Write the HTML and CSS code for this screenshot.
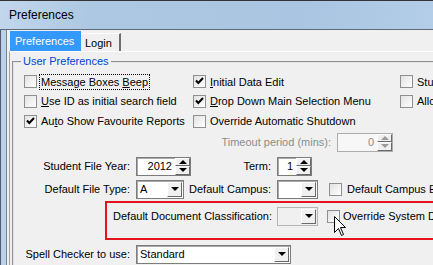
FILE: index.html
```html
<!DOCTYPE html>
<html lang="en">
<head>
    <meta charset="UTF-8">
    <title>Preferences</title>
    <link rel="stylesheet" href="styles.css">
</head>
<body>
    <div class="win">
        <div class="caption">Preferences</div>
        <div class="main">
            <div class="frame"></div>
            <div class="client">
                <div class="tabs">
                    <span class="tab cur">Preferences</span>
                    <span class="tab">Login</span>
                </div>
                <div class="page">
                    <fieldset class="group">
                        <legend>User Preferences</legend>
                        <div class="checks">
                            <div class="chk"><span class="box"></span><span class="focus">Message Boxes <u>B</u>eep</span></div>
                            <div class="chk"><span class="box"><svg width="11" height="11" viewBox="0 0 11 11"><path d="M2 4.5 L4.3 7 L9 2" fill="none" stroke="#000" stroke-width="2"/></svg></span><span><u>I</u>nitial Data Edit</span></div>
                            <div class="chk"><span class="box"></span><span>Student Search Default</span></div>
                            <div class="chk"><span class="box"></span><span><u>U</u>se ID as initial search field</span></div>
                            <div class="chk"><span class="box"><svg width="11" height="11" viewBox="0 0 11 11"><path d="M2 4.5 L4.3 7 L9 2" fill="none" stroke="#000" stroke-width="2"/></svg></span><span><u>D</u>rop Down Main Selection Menu</span></div>
                            <div class="chk"><span class="box"></span><span>Allow Multiple Logins</span></div>
                            <div class="chk"><span class="box"><svg width="11" height="11" viewBox="0 0 11 11"><path d="M2 4.5 L4.3 7 L9 2" fill="none" stroke="#000" stroke-width="2"/></svg></span><span>Au<u>t</u>o Show Favourite Reports</span></div>
                            <div class="chk"><span class="box"></span><span>Override Automatic Shutdown</span></div>
                        </div>

                        <div class="row r-timeout">
                            <span class="lbl off" style="width: 323px">Timeout period (mins):</span>
                            <div class="spin off" style="width: 56px"><span class="val">0</span><span class="arrows"><i class="up"></i><i class="dn"></i></span></div>
                        </div>

                        <div class="row r-year">
                            <span class="lbl" style="width: 122px">Student File Year:</span>
                            <div class="spin" style="width: 55px"><span class="val">2012</span><span class="arrows"><i class="up"></i><i class="dn"></i></span></div>
                            <span class="lbl" style="width: 86px">Term:</span>
                            <div class="spin" style="width: 35px"><span class="val">1</span><span class="arrows"><i class="up"></i><i class="dn"></i></span></div>
                        </div>

                        <div class="row r-type">
                            <span class="lbl" style="width: 122px">Default File Type:</span>
                            <div class="combo" style="width: 48px"><span class="val">A</span><span class="drop"></span></div>
                            <span class="lbl" style="width: 93px">Default Campus:</span>
                            <div class="combo" style="width: 41px"><span class="val"></span><span class="drop"></span></div>
                            <div class="chk c-campus"><span class="box"></span><span>Default Campus Enrolment</span></div>
                        </div>

                        <div class="redbox">
                            <div class="row">
                                <span class="lbl" style="width: 170px">Default Document Classification:</span>
                                <div class="combo off" style="width: 41px"><span class="val"></span><span class="drop"></span></div>
                                <div class="chk c-override"><span class="box"></span><span>Override System Default</span></div>
                            </div>
                        </div>

                        <div class="row r-spell">
                            <span class="lbl" style="width: 122px">Spell Checker to use:</span>
                            <div class="combo" style="width: 155px"><span class="val">Standard</span><span class="drop"></span></div>
                        </div>
                    </fieldset>
                </div>
            </div>
        </div>
        <svg class="cursor" width="13" height="21" viewBox="0 0 13 21"><path d="M0.5 0.5 L0.5 16.5 L4.5 12.5 L7.5 19.5 L9.5 18.5 L6.5 11.5 L11.5 11.5 Z" fill="#fff" stroke="#000" stroke-width="1"/></svg>
    </div>
</body>
</html>
```

FILE: styles.css
```css
* {
    margin: 0;
    padding: 0;
    box-sizing: border-box;
}

html,
body {
    width: 433px;
    height: 265px;
    overflow: hidden;
}

body {
    font: 11px "Liberation Sans", Arial, sans-serif;
    color: #000;
    background: #f0f0f0;
}

u {
    text-decoration: underline;
    text-underline-offset: 1px;
}

.win {
    position: relative;
    width: 560px;
}

/* title bar */
.caption {
    height: 30px;
    padding-left: 9px;
    line-height: 28px;
    font-size: 12px;
    border-top: 1px solid #343434;
    border-bottom: 1px solid #5d6b79;
    background: linear-gradient(100deg, #c2d7ec 0, #adc8e2 90px, #a9c5e1 300px, #b3cde8 420px, #bcd4ec 560px);
}

.main {
    display: flex;
    height: 235px;
}

.frame {
    width: 7px;
    background: #bad1e9;
    border-left: 1px solid #4f5c69;
    border-right: 1px solid #75838f;
}

.client {
    flex: 1;
    padding: 1px 0 0 2px;
}

/* tabs */
.tabs {
    display: flex;
    align-items: flex-end;
    height: 20px;
    padding-left: 1px;
}

.tab {
    height: 18px;
    width: 40px;
    padding-left: 4px;
    line-height: 18px;
    border-top: 1px solid #fff;
    border-right: 2px solid #6e6e6e;
}

.tab.cur {
    height: 20px;
    width: 71px;
    padding-left: 5px;
    line-height: 20px;
    color: #fff;
    background: #3399ff;
    border: 0;
}

.page {
    height: 214px;
    padding: 3px 0 0 2px;
    border-top: 1px solid #fff;
    border-left: 1px solid #a0a0a0;
}

/* group box */
.group {
    width: 540px;
    height: 230px;
    border: 2px groove #e4e4e4;
    padding: 0;
}

.group legend {
    margin-left: 7px;
    padding: 0 2px;
    line-height: 13px;
    color: #0046d5;
}

.checks {
    display: grid;
    grid-template-columns: 169px 207px auto;
    grid-template-rows: 19px 20px 20px;
    margin-top: 4px;
    padding-left: 10px;
}

.chk {
    display: flex;
    align-items: center;
    white-space: nowrap;
}

.box {
    display: flex;
    align-items: center;
    justify-content: center;
    flex: none;
    width: 13px;
    height: 13px;
    margin-right: 4px;
    border: 1px solid #8e8f8f;
    background: linear-gradient(135deg, #e2e2e2, #fff);
}

.focus {
    margin-left: -1px;
    padding: 1px 1px;
    outline: 1px dotted #000;
    outline-offset: 0;
}

/* rows with fields */
.row {
    display: flex;
    align-items: center;
    height: 20px;
    white-space: nowrap;
}

.r-timeout {
    margin-top: 1px;
}

.r-year {
    margin-top: 4px;
}

.r-type {
    margin-top: 3px;
}

.r-spell {
    margin-top: 4px;
}

.lbl {
    flex: none;
    text-align: right;
    padding-right: 6px;
}

.lbl.off {
    color: #8d8d8d;
}

.spin,
.combo {
    display: flex;
    flex: none;
    height: 19px;
    border: 1px solid #7c7c7c;
    box-shadow: inset 1px 1px 0 #a8a8a8;
    background: #fff;
}

.spin .val {
    flex: 1;
    text-align: right;
    padding: 2px 3px 0 0;
}

.spin.off {
    background: #f7f7f7;
    border-color: #adadad;
    box-shadow: none;
    color: #8d8d8d;
}

.arrows {
    display: flex;
    flex-direction: column;
    width: 15px;
}

.arrows i {
    flex: 1;
    display: flex;
    align-items: center;
    justify-content: center;
    background: #f0f0f0;
    border: 1px solid;
    border-color: #fff #696969 #696969 #fff;
}

.arrows i::after {
    content: "";
    border-left: 4px solid transparent;
    border-right: 4px solid transparent;
}

.arrows .up::after {
    border-bottom: 4px solid #000;
}

.arrows .dn::after {
    border-top: 4px solid #000;
}

.spin.off .arrows .up::after {
    border-bottom-color: #9a9a9a;
}

.spin.off .arrows .dn::after {
    border-top-color: #9a9a9a;
}

.combo .val {
    flex: 1;
    padding: 2px 0 0 3px;
}

.drop {
    display: flex;
    align-items: center;
    justify-content: center;
    width: 15px;
    margin: 1px 1px 1px 0;
    background: #f0f0f0;
    border: 1px solid;
    border-color: #fff #696969 #696969 #fff;
}

.drop::after {
    content: "";
    border-left: 4px solid transparent;
    border-right: 4px solid transparent;
    border-top: 4px solid #000;
}

.combo.off {
    background: #f0f0f0;
    border-color: #b5b5b5;
    box-shadow: none;
}

.c-campus {
    margin-left: 11px;
}

.c-campus .box {
    margin-right: 5px;
}

.redbox {
    width: 420px;
    height: 39px;
    margin: 2px 0 0 91px;
    padding-top: 3px;
    border: 2px solid #e8121e;
}

.redbox .lbl {
    padding-right: 5px;
}

.c-override {
    margin-left: 9px;
}

.c-override .box {
    margin-right: 3px;
}

.cursor {
    position: absolute;
    left: 334px;
    top: 216px;
}
```
